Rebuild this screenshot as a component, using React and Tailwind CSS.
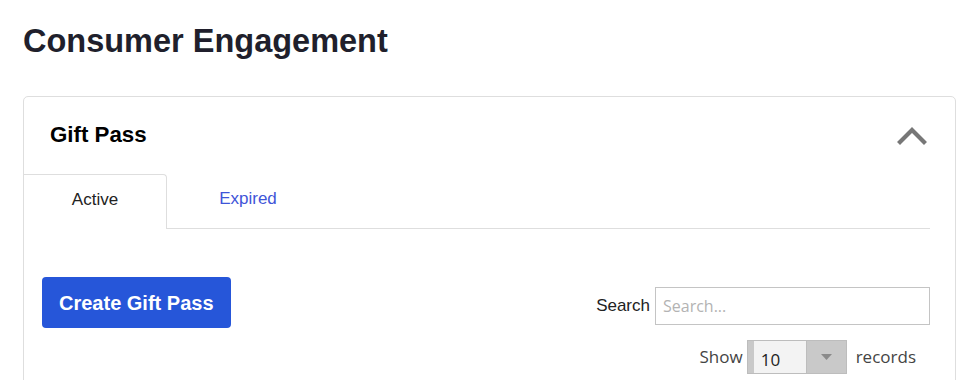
import { useState } from 'react'

const ChevronUp = () => (
  <svg width="30" height="20" viewBox="0 0 30 20" fill="none">
    <path d="M3 17 L15 5 L27 17" stroke="#777777" strokeWidth="4.2" strokeLinecap="square" />
  </svg>
)

export default function App() {
  const [tab, setTab] = useState('active')

  return (
    <div className="min-h-screen bg-white pl-[24px] pr-[18px] pt-[22px] font-['Liberation_Sans',Arial,sans-serif]">
      {/* Page title */}
      <h1 className="text-[32.5px] font-bold leading-[38px] text-[#201f2c] -ml-[1px]">Consumer Engagement</h1>

      {/* Card */}
      <div className="mt-[36px] -ml-[1px] border border-[#dedede] rounded-[5px] bg-white">
        {/* Card header */}
        <div className="flex h-[77px] items-center justify-between pl-[26px] pr-[28px]">
          <h2 className="text-[22.3px] font-bold text-black pb-[1px]">Gift Pass</h2>
          <button className="pb-[2px]">
            <ChevronUp />
          </button>
        </div>

        {/* Tabs */}
        <div className="mr-[25px] flex border-b border-[#dedede]">
          <button
            onClick={() => setTab('active')}
            className="-mb-px flex h-[55px] w-[143px] items-center justify-center rounded-tr-[4px] border-t border-r border-[#dedede] bg-white pb-[4px] text-[17px] text-[#222]"
          >
            Active
          </button>
          <button
            onClick={() => setTab('expired')}
            className="flex h-[54px] w-[162px] items-center justify-center pb-[4px] text-[17px] text-[#3f55d8]"
          >
            Expired
          </button>
        </div>

        {/* Body */}
        <div className="pl-[18px] pr-[25px] pt-[48px]">
          <div className="flex items-start justify-between">
            <button className="h-[51px] rounded-[4px] bg-[#2656d9] px-[17px] text-[20px] font-bold text-white">
              Create Gift Pass
            </button>
            <div className="mt-[10px] flex items-center gap-[5px]">
              <span className="text-[17px] text-[#222]">Search</span>
              <input
                placeholder="Search..."
                className="h-[38px] w-[275px] border border-[#c4c4c4] px-[7px] font-['Open_Sans',sans-serif] text-[16px] text-[#333] outline-none placeholder:text-[#b3b3b3]"
              />
            </div>
          </div>

          <div className="mt-[12px] mr-[14px] flex items-center justify-end font-['Open_Sans',sans-serif] text-[17px] text-[#444]">
            <span>Show</span>
            <div className="ml-[4px] mr-[9px] flex h-[34px] w-[100px] border border-[#bdbdbd] bg-[#c9c9c9]">
              <div className="ml-[6px] flex w-[53px] items-center border-r border-[#bdbdbd] bg-[#f3f3f3] pl-[7px] pt-[6px] text-[17px] text-[#222]">
                10
              </div>
              <div className="flex flex-1 items-center justify-center">
                <svg width="11" height="6" viewBox="0 0 11 6">
                  <path d="M0 0 H11 L5.5 6 Z" fill="#8a8a8a" />
                </svg>
              </div>
            </div>
            <span>records</span>
          </div>
        </div>
        <div className="h-[20px]" />
      </div>
    </div>
  )
}
